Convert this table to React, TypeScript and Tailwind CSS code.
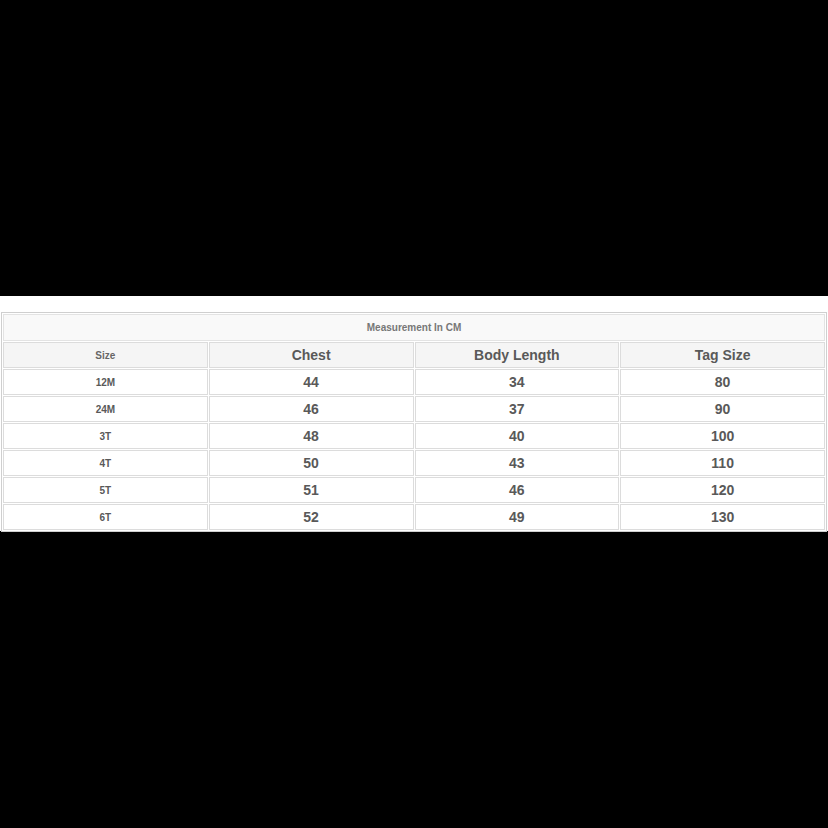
const rows = [
  ['12M', '44', '34', '80'],
  ['24M', '46', '37', '90'],
  ['3T', '48', '40', '100'],
  ['4T', '50', '43', '110'],
  ['5T', '51', '46', '120'],
  ['6T', '52', '49', '130'],
];

export default function App() {
  return (
    <div className="w-[828px] h-[828px] bg-black flex flex-col font-['Liberation_Sans',Arial,sans-serif]">
      <div className="h-[296px] shrink-0" />
      <div className="h-[235px] shrink-0 bg-white pt-[16px] px-[1px]">
        <table className="w-[826px] table-fixed border-separate border-spacing-[1px] border border-[#cfcfcf] text-center">
          <tbody>
            <tr className="h-[27px]">
              <td colSpan={4} className="border border-[#e3e3e3] bg-[#f9f9f9] text-[10px] font-bold text-[#777]">
                Measurement In CM
              </td>
            </tr>
            <tr className="h-[26px] bg-[#f5f5f5]">
              <td className="border border-[#dcdcdc] text-[10px] font-bold text-[#666]">Size</td>
              <td className="border border-[#dcdcdc] text-[14px] font-bold text-[#595959]">Chest</td>
              <td className="border border-[#dcdcdc] text-[14px] font-bold text-[#595959]">Body Length</td>
              <td className="border border-[#dcdcdc] text-[14px] font-bold text-[#595959]">Tag Size</td>
            </tr>
            {rows.map((r) => (
              <tr key={r[0]} className="h-[26px] bg-white">
                <td className="border border-[#dcdcdc] text-[10px] font-bold text-[#595959]">{r[0]}</td>
                <td className="border border-[#dcdcdc] text-[14px] font-bold text-[#595959]">{r[1]}</td>
                <td className="border border-[#dcdcdc] text-[14px] font-bold text-[#595959]">{r[2]}</td>
                <td className="border border-[#dcdcdc] text-[14px] font-bold text-[#595959]">{r[3]}</td>
              </tr>
            ))}
          </tbody>
        </table>
      </div>
      <div className="flex-1" />
    </div>
  );
}
